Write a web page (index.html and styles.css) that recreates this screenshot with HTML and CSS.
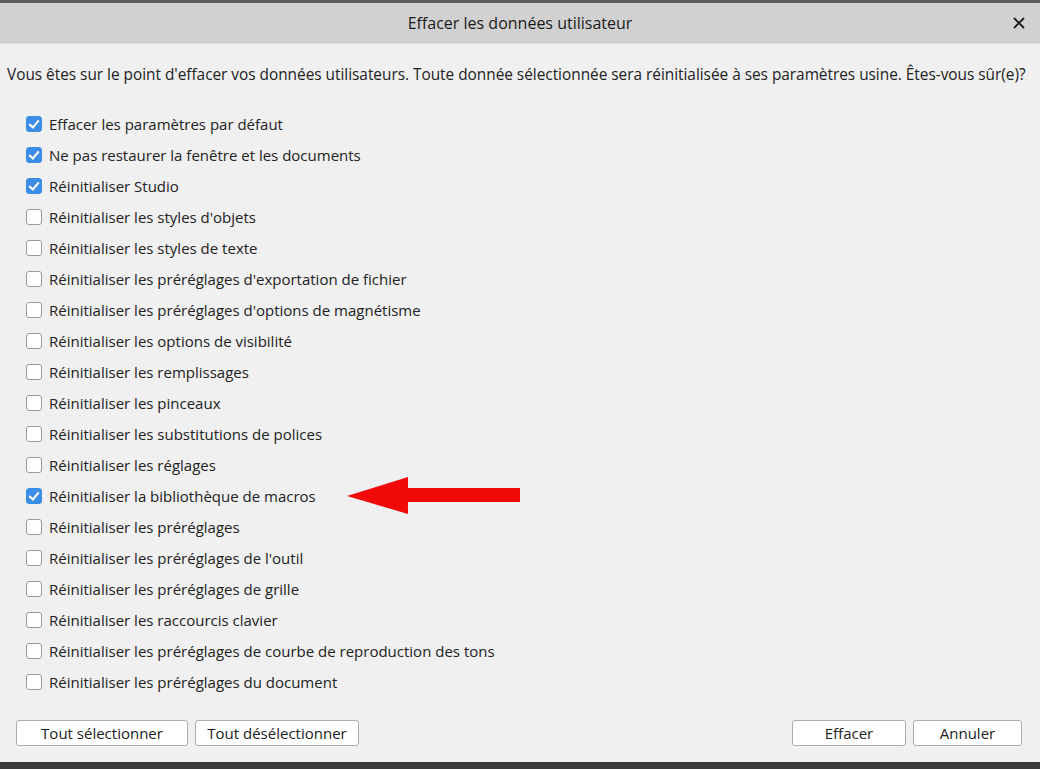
FILE: index.html
```html
<!DOCTYPE html>
<html lang="fr">
<head>
<meta charset="utf-8">
<title>Effacer les données utilisateur</title>
<link rel="stylesheet" href="styles.css">
</head>
<body>
<div class="window">
  <div class="titlebar">
    <span class="title">Effacer les données utilisateur</span>
    <span class="close">
      <svg width="12" height="12" viewBox="0 0 12 12"><path d="M1 1 L11 11 M11 1 L1 11" stroke="#1a1a1a" stroke-width="1.8" fill="none"/></svg>
    </span>
  </div>
  <div class="content">
    <p class="desc">Vous êtes sur le point d'effacer vos données utilisateurs. Toute donnée sélectionnée sera réinitialisée à ses paramètres usine. Êtes-vous sûr(e)?</p>
    <ul class="list">
      <li class="item"><span class="cb on"></span>Effacer les paramètres par défaut</li>
      <li class="item"><span class="cb on"></span>Ne pas restaurer la fenêtre et les documents</li>
      <li class="item"><span class="cb on"></span>Réinitialiser Studio</li>
      <li class="item"><span class="cb"></span>Réinitialiser les styles d'objets</li>
      <li class="item"><span class="cb"></span>Réinitialiser les styles de texte</li>
      <li class="item"><span class="cb"></span>Réinitialiser les préréglages d'exportation de fichier</li>
      <li class="item"><span class="cb"></span>Réinitialiser les préréglages d'options de magnétisme</li>
      <li class="item"><span class="cb"></span>Réinitialiser les options de visibilité</li>
      <li class="item"><span class="cb"></span>Réinitialiser les remplissages</li>
      <li class="item"><span class="cb"></span>Réinitialiser les pinceaux</li>
      <li class="item"><span class="cb"></span>Réinitialiser les substitutions de polices</li>
      <li class="item"><span class="cb"></span>Réinitialiser les réglages</li>
      <li class="item marked"><span class="cb on"></span>Réinitialiser la bibliothèque de macros
        <svg class="arrow" width="174" height="38" viewBox="0 0 174 38"><polygon points="0,19 61,0 61,11 173,11 173,25 61,25 61,37" fill="#f20a0a"/></svg>
      </li>
      <li class="item"><span class="cb"></span>Réinitialiser les préréglages</li>
      <li class="item"><span class="cb"></span>Réinitialiser les préréglages de l'outil</li>
      <li class="item"><span class="cb"></span>Réinitialiser les préréglages de grille</li>
      <li class="item"><span class="cb"></span>Réinitialiser les raccourcis clavier</li>
      <li class="item"><span class="cb"></span>Réinitialiser les préréglages de courbe de reproduction des tons</li>
      <li class="item"><span class="cb"></span>Réinitialiser les préréglages du document</li>
    </ul>
    <div class="footer">
      <div class="group">
        <button class="btn w-sel">Tout sélectionner</button>
        <button class="btn w-desel">Tout désélectionner</button>
      </div>
      <div class="group">
        <button class="btn w-eff">Effacer</button>
        <button class="btn w-ann">Annuler</button>
      </div>
    </div>
  </div>
</div>
</body>
</html>
```
FILE: styles.css
```css
html, body {
  margin: 0;
  padding: 0;
  height: 100%;
}
body {
  background: #3b3b3b;
  font-family: "Open Sans", "Noto Sans", sans-serif;
  font-size: 15px;
  color: #222222;
}
.window {
  height: 762px;
  display: flex;
  flex-direction: column;
  border-top: 3px solid #5c5c5c;
  box-sizing: border-box;
  background: #f0f0f0;
}
.titlebar {
  height: 41px;
  flex: none;
  background: #d1d1d1;
  border-bottom: 1px solid #dcdcdc;
  box-sizing: border-box;
  display: flex;
  align-items: center;
  justify-content: center;
  position: relative;
}
.title {
  font-size: 16px;
  color: #1a1a1a;
  margin-top: -1px;
}
.close {
  position: absolute;
  right: 15px;
  top: 14px;
  display: flex;
}
.content {
  flex: 1;
  display: flex;
  flex-direction: column;
  padding: 0 8px 0 7px;
}
.desc {
  margin: 21px 0 0 0;
  line-height: 20px;
  font-size: 15.4px;
  white-space: nowrap;
  letter-spacing: -0.02px;
}
.list {
  list-style: none;
  margin: 23px 0 0 0;
  padding: 0 0 0 19px;
}
.item {
  height: 31px;
  display: flex;
  align-items: center;
  position: relative;
}
.cb {
  width: 14px;
  height: 14px;
  border: 1px solid #9a9a9a;
  border-radius: 3px;
  background: #ffffff;
  margin-right: 7px;
  flex: none;
  box-sizing: content-box;
  position: relative;
}
.cb.on {
  background: #3b8de8;
  border-color: #3b8de8;
}
.cb.on::after {
  content: "";
  position: absolute;
  left: 4px;
  top: 1px;
  width: 4px;
  height: 8px;
  border: solid #ffffff;
  border-width: 0 2px 2px 0;
  transform: rotate(40deg);
}
.arrow {
  position: absolute;
  left: 321px;
  top: -3px;
}
.footer {
  margin-top: 23px;
  display: flex;
  justify-content: space-between;
  padding: 0 10px 0 9px;
}
.group {
  display: flex;
  gap: 7px;
}
.btn {
  height: 26px;
  background: #ffffff;
  border: 1px solid #adadad;
  border-radius: 3px;
  font-family: inherit;
  font-size: 15px;
  color: #222222;
  padding: 0;
}
.w-sel { width: 172px; }
.w-desel { width: 164px; }
.w-eff { width: 114px; }
.w-ann { width: 109px; }
```
